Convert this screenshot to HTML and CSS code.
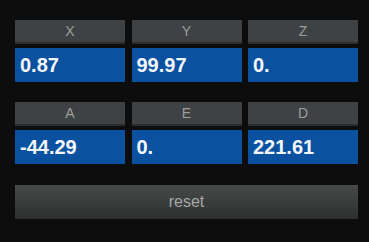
FILE: index.html
```html
<!DOCTYPE html>
<html>
<head>
<meta charset="utf-8">
<link rel="stylesheet" href="styles.css">
</head>
<body>
<div class="panel">
  <div class="grid">
    <div class="cell"><div class="label">X</div><div class="value">0.87</div></div>
    <div class="cell"><div class="label">Y</div><div class="value">99.97</div></div>
    <div class="cell"><div class="label">Z</div><div class="value">0.</div></div>
  </div>
  <div class="grid">
    <div class="cell"><div class="label">A</div><div class="value">-44.29</div></div>
    <div class="cell"><div class="label">E</div><div class="value">0.</div></div>
    <div class="cell"><div class="label">D</div><div class="value">221.61</div></div>
  </div>
  <button class="reset">reset</button>
</div>
</body>
</html>
```
FILE: styles.css
```css
html, body {
  margin: 0;
  padding: 0;
  background: #0d0d0d;
  width: 369px;
  height: 242px;
  overflow: hidden;
}
.panel {
  padding: 20px 11px 0 15px;
  display: flex;
  flex-direction: column;
  gap: 20px;
  font-family: "Liberation Sans", Arial, sans-serif;
}
.grid {
  display: grid;
  grid-template-columns: 110px 110px 110px;
  column-gap: 6.5px;
}
.cell {
  display: flex;
  flex-direction: column;
  gap: 4px;
}
.label {
  height: 22px;
  background: #3f4244;
  border-bottom: 2px solid #2b2d2e;
  color: #9c9e9e;
  font-size: 14px;
  line-height: 22px;
  text-align: center;
}
.value {
  height: 34px;
  background: #0a51a0;
  color: #f4f6fb;
  font-size: 20px;
  font-weight: bold;
  line-height: 34px;
  padding-left: 5px;
}
.reset {
  margin-top: 1px;
  width: 343px;
  height: 34px;
  border: none;
  background: linear-gradient(#474a49, #2d3030);
  color: #a6a8a8;
  font-family: "Liberation Sans", Arial, sans-serif;
  font-size: 16px;
  padding: 0;
}
```
